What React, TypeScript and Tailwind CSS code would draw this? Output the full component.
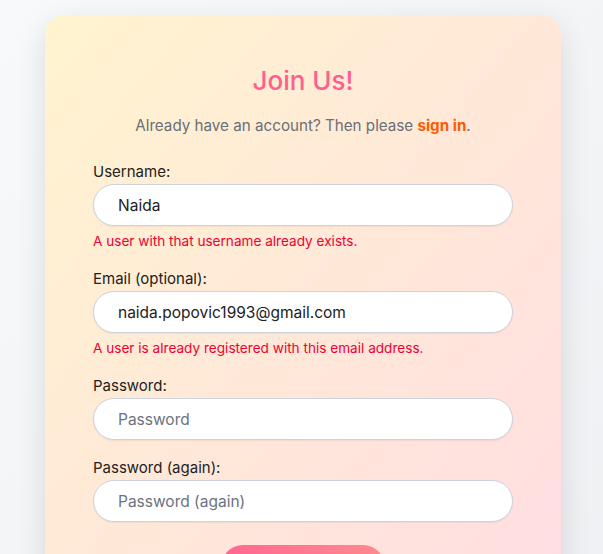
export default function App() {
  return (
    <div className="min-h-screen bg-gradient-to-br from-[#f8f9fa] to-[#eef0f3] font-['Inter',sans-serif] pt-[15px]">
      <div className="mx-auto ml-[45px] w-[516px] rounded-[20px] bg-gradient-to-br from-[#fff4cf] via-[#ffe8d8] to-[#ffdde3] px-12 pt-[48px] pb-10 shadow-[0_10px_30px_rgba(0,0,0,0.12)]">
        <h1 className="text-center text-[26px] leading-[36px] font-medium text-[#ff5e8e]">Join Us!</h1>
        <p className="mt-[17px] text-center text-[15.2px] leading-[20px] text-[#6b6f76]">
          Already have an account? Then please{" "}
          <a className="font-bold text-[#ff5a00]">sign in</a>.
        </p>
        <form className="mt-[24px] flex flex-col">
          <Field label="Username:" value="Naida" error="A user with that username already exists." />
          <Field label="Email (optional):" value="naida.popovic1993@gmail.com" error="A user is already registered with this email address." />
          <Field label="Password:" placeholder="Password" type="password" />
          <Field label="Password (again):" placeholder="Password (again)" type="password" />
          <div className="mt-[7px] flex justify-center">
            <button type="button" className="h-[44px] w-[164px] rounded-full bg-gradient-to-r from-[#ff6692] to-[#ff8a8f] text-[16px] font-semibold text-white">
              Sign Up
            </button>
          </div>
        </form>
      </div>
    </div>
  );
}

function Field({
  label,
  value,
  placeholder,
  error,
  type = "text",
}: {
  label: string;
  value?: string;
  placeholder?: string;
  error?: string;
  type?: string;
}) {
  return (
    <div className="mb-[16px] flex flex-col">
      <label className="text-[15px] leading-[24px] text-[#222]">{label}</label>
      <input
        type={type}
        defaultValue={value}
        placeholder={placeholder}
        className="h-[42px] w-full rounded-full border border-[#cdd3dc] bg-white px-[24px] text-[15.5px] text-[#222] placeholder:text-[#6b7280] shadow-[0_1px_2px_rgba(0,0,0,0.06)] outline-none"
      />
      {error && (
        <p className="mt-[6px] text-[13.6px] leading-[19px] text-[#ee0033]">{error}</p>
      )}
    </div>
  );
}
